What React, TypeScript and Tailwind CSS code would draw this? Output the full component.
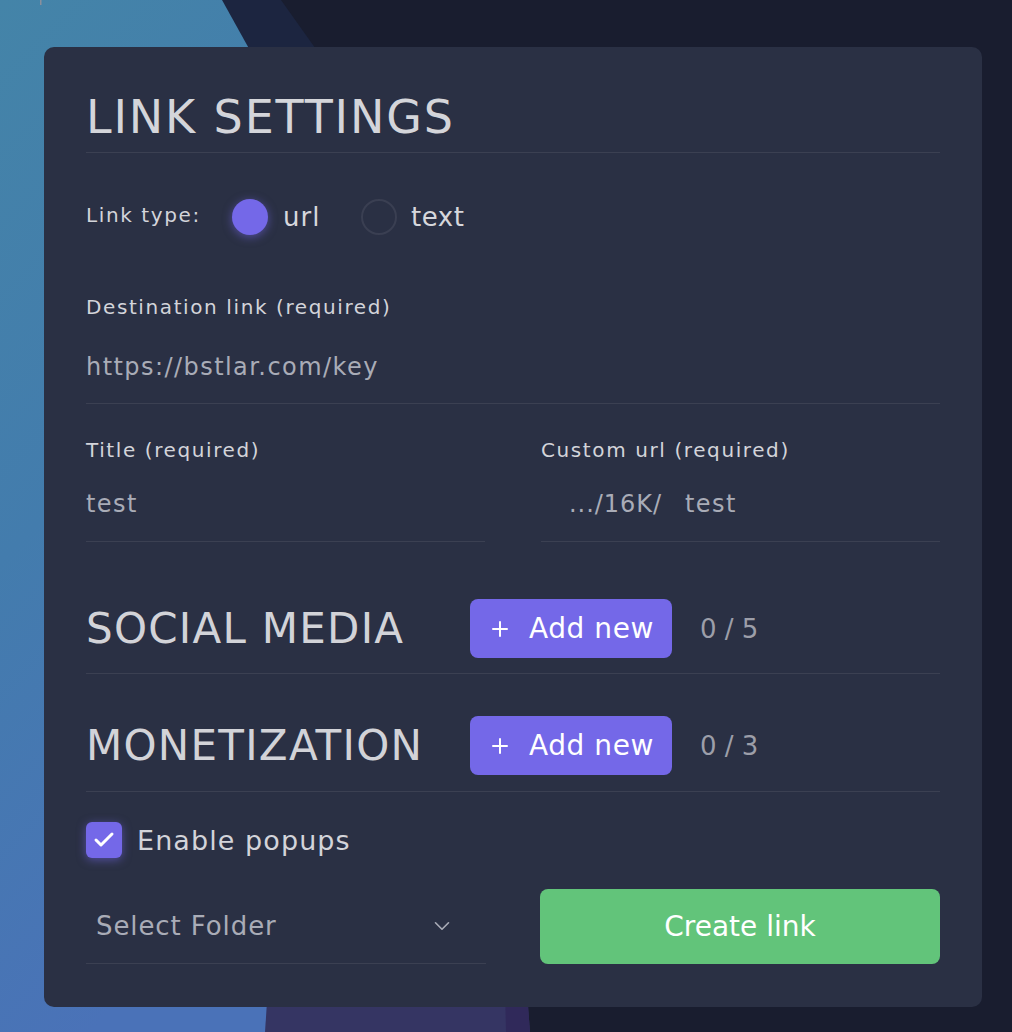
import { Check, ChevronDown, Plus } from "lucide-react";

const Backdrop = () => (
  <svg className="absolute inset-0" width="1012" height="1032" viewBox="0 0 1012 1032">
    <defs>
      <linearGradient id="blue" x1="0" y1="0" x2="0.3" y2="1">
        <stop offset="0" stopColor="#4484a8" />
        <stop offset="0.5" stopColor="#437cad" />
        <stop offset="1" stopColor="#4a72b8" />
      </linearGradient>
    </defs>
    <rect width="1012" height="1032" fill="#191d2f" />
    <path d="M210 0 L281 0 L345 90 L345 400 L0 400 L0 0 Z" fill="#1c2540" />
    <path d="M250 900 L520 900 L530 1032 L265 1032 Z" fill="#353563" />
    <path d="M503 900 L520 900 L530 1032 L506 1032 Z" fill="#30295a" />
    <path d="M0 0 L222 0 L272 90 L300 500 L265 1032 L0 1032 Z" fill="url(#blue)" />
    <rect x="40" y="0" width="1.5" height="5" fill="#8a8f9c" />
  </svg>
);

const Label = ({ children }: { children: React.ReactNode }) => (
  <div className="text-[20px] leading-[28px] tracking-[0.08em] text-[#d3d4da]">{children}</div>
);

const Section = ({ title, count }: { title: string; count: string }) => (
  <div className="flex items-center h-[59px]">
    <div className="w-[384px] text-[42px] leading-none tracking-[0.03em] text-[#d2d3d8]">{title}</div>
    <button className="w-[202px] h-[59px] rounded-[8px] bg-[#7468e8] flex items-center pl-[18px] text-white">
      <Plus size={24} strokeWidth={2} />
      <span className="ml-[17px] text-[28px] leading-none tracking-[0.02em]">Add new</span>
    </button>
    <div className="ml-[28px] text-[26px] leading-none text-[#9c9ea9]">{count}</div>
  </div>
);

export default function App() {
  return (
    <div className="relative w-[1012px] h-[1032px] overflow-hidden font-['DejaVu_Sans',sans-serif]">
      <Backdrop />
      <div className="relative pl-[44px] pt-[47px]">
        <div className="w-[938px] h-[960px] rounded-[10px] bg-[#2a3044] px-[42px] pt-[40px]">
          {/* Header */}
          <div className="h-[66px] pb-[6px] flex items-center border-b border-[#3b4052]">
            <h1 className="text-[46px] leading-none tracking-[0.04em] text-[#d4d5da]">LINK SETTINGS</h1>
          </div>

          {/* Link type */}
          <div className="mt-[46px] h-[36px] flex items-center">
            <div className="w-[146px] pb-[4px] text-[20px] tracking-[0.08em] text-[#d3d4da]">Link type:</div>
            <div className="w-[129px] flex items-center">
              <span className="w-[36px] h-[36px] rounded-full bg-[#7468e8] shadow-[0_2px_10px_rgba(116,104,232,0.55)]" />
              <span className="ml-[15px] text-[26px] tracking-[0.04em] text-[#d6d7dc]">url</span>
            </div>
            <div className="flex items-center">
              <span className="w-[36px] h-[36px] rounded-full border-2 border-[#3a3f52]" />
              <span className="ml-[14px] text-[26px] tracking-[0.02em] text-[#d6d7dc]">text</span>
            </div>
          </div>

          {/* Destination */}
          <div className="mt-[58px] pb-[20px] border-b border-[#3b4052]">
            <Label>Destination link (required)</Label>
            <div className="mt-[30px] text-[24px] leading-[32px] tracking-[0.06em] text-[#a9acb7]">
              https://bstlar.com/key
            </div>
          </div>

          {/* Title + custom url */}
          <div className="mt-[32px] grid grid-cols-2 gap-[56px]">
            <div className="pb-[21px] border-b border-[#3b4052]">
              <Label>Title (required)</Label>
              <div className="mt-[24px] text-[24px] leading-[32px] tracking-[0.06em] text-[#a9acb7]">test</div>
            </div>
            <div className="pb-[21px] border-b border-[#3b4052]">
              <Label>Custom url (required)</Label>
              <div className="mt-[24px] pl-[28px] flex text-[24px] leading-[32px] tracking-[0.04em] text-[#a9acb7]">
                <span className="w-[116px]">.../16K/</span>
                <span className="tracking-[0.06em]">test</span>
              </div>
            </div>
          </div>

          {/* Social media */}
          <div className="mt-[57px] pb-[15px] border-b border-[#3b4052]">
            <Section title="SOCIAL MEDIA" count="0 / 5" />
          </div>

          {/* Monetization */}
          <div className="mt-[42px] pb-[16px] border-b border-[#3b4052]">
            <Section title="MONETIZATION" count="0 / 3" />
          </div>

          {/* Popups */}
          <div className="mt-[30px] flex items-center h-[36px]">
            <span className="w-[36px] h-[36px] rounded-[6px] bg-[#7468e8] flex items-center justify-center text-white shadow-[0_2px_10px_rgba(116,104,232,0.55)]">
              <Check size={24} strokeWidth={3} />
            </span>
            <span className="ml-[15px] text-[27px] leading-none tracking-[0.04em] text-[#d3d4da]">Enable popups</span>
          </div>

          {/* Folder + create */}
          <div className="mt-[31px] grid grid-cols-2 gap-[54px]">
            <div className="h-[75px] border-b border-[#3b4052] flex items-center justify-between pl-[10px] pr-[31px]">
              <span className="text-[26px] leading-none tracking-[0.035em] text-[#a9acb7]">Select Folder</span>
              <ChevronDown size={26} strokeWidth={1.5} className="text-[#a9acb7]" />
            </div>
            <button className="h-[75px] rounded-[8px] bg-[#62c47a] flex items-center justify-center text-white text-[28px] leading-none">
              Create link
            </button>
          </div>
        </div>
      </div>
    </div>
  );
}
